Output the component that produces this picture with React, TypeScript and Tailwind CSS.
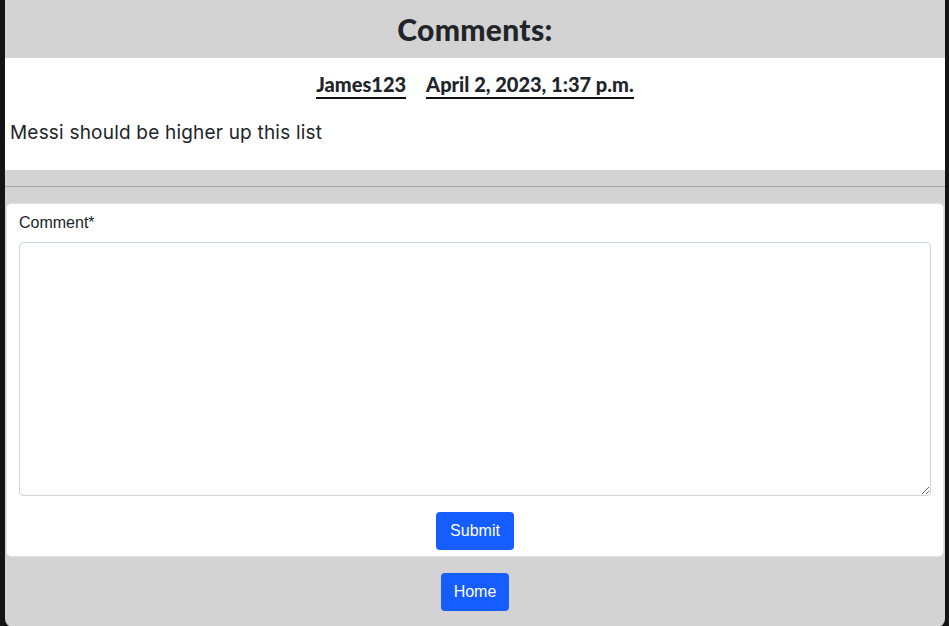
import { useState } from "react";

const comments = [
  {
    id: 1,
    author: "James123",
    date: "April 2, 2023, 1:37 p.m.",
    body: "Messi should be higher up this list",
  },
];

export default function App() {
  const [text, setText] = useState("");

  return (
    <div className="min-h-screen bg-[#141414] pl-[5px] pr-[4px]">
      <div className="bg-[#d3d3d3] rounded-b-[8px] min-h-[626px] flex flex-col">
        <h2 className="h-[58px] flex items-center justify-center text-[30px] font-black text-[#212529] font-['Lato',sans-serif] tracking-[0.3px]">
          Comments:
        </h2>

        {comments.map((c) => (
          <div key={c.id} className="bg-white pt-[14px] pb-[23px]">
            <div className="flex justify-center gap-[20px] font-['Lato',sans-serif] font-black text-[20px] text-[#212529]">
              <span className="border-b-2 border-[#111] leading-[24px] pb-[1px]">{c.author}</span>
              <span className="border-b-2 border-[#111] leading-[24px] pb-[1px]">{c.date}</span>
            </div>
            <p className="mt-[20px] pl-[5px] text-[19px] leading-[28px] text-[#212529] font-['Inter',sans-serif] tracking-[0.2px]">
              {c.body}
            </p>
          </div>
        ))}

        <div className="h-[33px] pt-[16px]">
          <hr className="w-full border-t border-[#a6a6a6]" />
        </div>

        <form
          className="bg-white mx-[1px] border border-[#dee2e6] rounded-[5px] px-[12px] pt-[7px] pb-[6px] flex flex-col font-['Liberation_Sans',Arial,sans-serif]"
          onSubmit={(e) => e.preventDefault()}
        >
          <label className="text-[16px] leading-[24px] text-[#212529]">Comment*</label>
          <textarea
            value={text}
            onChange={(e) => setText(e.target.value)}
            className="mt-[7px] h-[254px] w-full border border-[#ced4da] rounded-[4px] outline-none px-3 py-2"
          />
          <div className="flex justify-center mt-[16px]">
            <button className="bg-[#165dff] text-white rounded-[4px] h-[38px] px-[14px] text-[16px]">
              Submit
            </button>
          </div>
        </form>

        <div className="flex justify-center pt-[16px] pb-[16px]">
          <button className="bg-[#165dff] text-white rounded-[4px] h-[38px] px-[13px] text-[16px] font-['Liberation_Sans',Arial,sans-serif]">
            Home
          </button>
        </div>
      </div>
    </div>
  );
}
